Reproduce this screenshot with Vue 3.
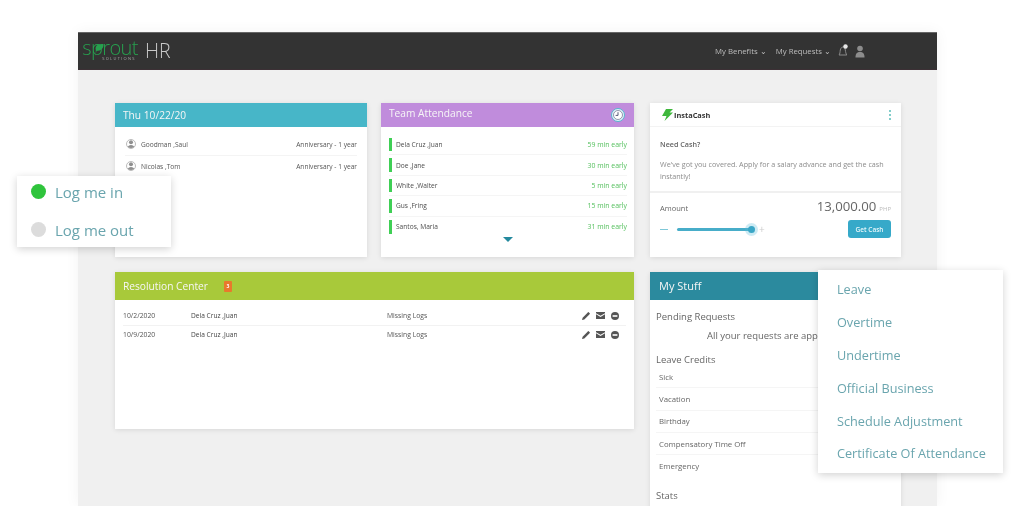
<script setup>
const birthdays = [
  { name: 'Goodman ,Saul', note: 'Anniversary - 1 year' },
  { name: 'Nicolas ,Tom', note: 'Anniversary - 1 year' },
]
const attendance = [
  { name: 'Dela Cruz ,Juan', note: '59 min early' },
  { name: 'Doe ,Jane', note: '30 min early' },
  { name: 'White ,Walter', note: '5 min early' },
  { name: 'Gus ,Fring', note: '15 min early' },
  { name: 'Santos, Maria', note: '31 min early' },
]
const resolutions = [
  { date: '10/2/2020', name: 'Dela Cruz ,Juan', issue: 'Missing Logs' },
  { date: '10/9/2020', name: 'Dela Cruz ,Juan', issue: 'Missing Logs' },
]
const credits = ['Sick', 'Vacation', 'Birthday', 'Compensatory Time Off', 'Emergency']
const requests = ['Leave', 'Overtime', 'Undertime', 'Official Business', 'Schedule Adjustment', 'Certificate Of Attendance']
</script>

<template>
  <div class="page">
    <div class="shell">
      <header class="nav">
        <div class="logo">
          <div class="logo-mark">
            <span class="logo-word">sprout</span>
            <svg class="leaf" width="12" height="16" viewBox="0 0 12 16">
              <path d="M2 15C3 11 3 9 2.500 6 3 3 6 1.500 10.500 2 11 6 8 9 3.500 9" fill="#27a04e" />
            </svg>
            <span class="logo-sub">SOLUTIONS</span>
          </div>
          <span class="logo-hr">HR</span>
        </div>
        <nav class="nav-links">
          <span>My Benefits ⌄</span>
          <span class="nav-link">My Requests ⌄</span>
          <svg width="12" height="14" viewBox="0 0 12 14">
            <path d="M2 11c1-1 1-3 1.300-5S5 3 6 3s2 1 2.300 3 .7 4 1.500 5z" fill="none" stroke="#8a8a8a" stroke-width="1" />
            <circle cx="8.500" cy="2.500" r="2.200" fill="#e8e8e8" />
          </svg>
          <svg width="10" height="13" viewBox="0 0 10 13">
            <circle cx="5" cy="3.500" r="2.800" fill="#8c8c8c" />
            <path d="M0.500 12.500c0-4 1.500-5.500 4.500-5.500s4.500 1.500 4.500 5.500z" fill="#8c8c8c" />
          </svg>
        </nav>
      </header>

      <main class="content">
        <section class="card">
          <h2 class="card-head head-teal">Thu 10/22/20</h2>
          <ul class="birthdays">
            <li v-for="item in birthdays" :key="item.name" class="birthday">
              <span class="avatar">
                <svg width="8" height="9" viewBox="0 0 8 9">
                  <circle cx="4" cy="2.300" r="2" fill="#8f8f8f" />
                  <path d="M.5 9c0-3 1.500-4 3.500-4s3.500 1 3.500 4z" fill="#8f8f8f" />
                </svg>
              </span>
              <span class="grow">{{ item.name }}</span>
              <span>{{ item.note }}</span>
            </li>
          </ul>
        </section>

        <section class="card">
          <h2 class="card-head head-purple">
            <span class="grow attend-title">Team Attendance</span>
            <svg width="14" height="14" viewBox="0 0 14 14">
              <circle cx="7" cy="7" r="6.500" fill="#dff2f7" stroke="#58b3cf" stroke-width="1" />
              <circle cx="7" cy="7" r="4.500" fill="#fff" stroke="#7a7f9a" stroke-width=".8" />
              <path d="M7 4.200V7.400H4.600" fill="none" stroke="#555a78" stroke-width="1" />
            </svg>
          </h2>
          <ul class="attendance">
            <li v-for="item in attendance" :key="item.name" class="attendee">
              <span class="grow">{{ item.name }}</span>
              <span class="early">{{ item.note }}</span>
            </li>
          </ul>
          <div class="more"></div>
        </section>

        <section class="card cash side">
          <div class="cash-head">
            <svg width="13" height="12" viewBox="0 0 13 12">
              <path d="M5 0h7L8.500 3.500H12L3.500 12l2-5H1z" fill="#3fb83c" />
            </svg>
            <strong class="grow">InstaCash</strong>
            <span class="dots"><i></i><i></i><i></i></span>
          </div>
          <div class="cash-body">
            <p class="need">Need Cash?</p>
            <p class="copy">We've got you covered. Apply for a salary advance and get the cash instantly!</p>
          </div>
          <div class="cash-foot">
            <div class="amount-row">
              <span class="grow">Amount</span>
              <span class="amount">13,000.00</span>
              <span class="php">PHP</span>
            </div>
            <div class="slider-row">
              <span class="minus"></span>
              <span class="track"><span class="knob"></span></span>
              <span class="plus">+</span>
              <button class="get-cash" type="button">Get Cash</button>
            </div>
          </div>
        </section>

        <section class="card wide">
          <h2 class="card-head head-green tall">
            Resolution Center
            <span class="badge">3</span>
          </h2>
          <ul class="resolutions">
            <li v-for="item in resolutions" :key="item.date" class="resolution">
              <span class="res-date">{{ item.date }}</span>
              <span class="res-name">{{ item.name }}</span>
              <span class="res-issue">{{ item.issue }}</span>
              <span class="res-actions">
                <svg width="8" height="8" viewBox="0 0 9 9"><path d="M0 9l.7-2.600L6 1l2 2-5.400 5.300zM6.700.3l.5-.3L9 1.800l-.3.500L8 3 6 1z" fill="#555" /></svg>
                <svg width="9" height="7" viewBox="0 0 9 7"><path d="M0 0h9v1.200L4.500 3.800 0 1.200zM0 2.300l4.500 2.600L9 2.300V7H0z" fill="#555" /></svg>
                <svg width="8" height="8" viewBox="0 0 8 8"><circle cx="4" cy="4" r="4" fill="#555" /><rect x="1.600" y="3.200" width="4.800" height="1.600" fill="#fff" /></svg>
              </span>
            </li>
          </ul>
        </section>

        <section class="card stuff side">
          <h2 class="card-head head-blue tall">My Stuff</h2>
          <div class="stuff-body">
            <h3>Pending Requests</h3>
            <p class="approved">All your requests are approved</p>
            <h3>Leave Credits</h3>
            <ul class="credits">
              <li v-for="item in credits" :key="item">{{ item }}</li>
            </ul>
            <h3 class="stats">Stats</h3>
          </div>
        </section>
      </main>
    </div>

    <div class="popup clock">
      <div class="clock-row"><span class="dot on"></span>Log me in</div>
      <div class="clock-row"><span class="dot"></span>Log me out</div>
    </div>

    <ul class="popup request-menu">
      <li v-for="item in requests" :key="item">{{ item }}</li>
    </ul>
  </div>
</template>

<style>
html, body { margin: 0; background: #fff; }
</style>

<style scoped>
* { box-sizing: border-box; }
ul { list-style: none; margin: 0; padding: 0; }
h2, h3, p { margin: 0; font-weight: 400; }
.grow { flex: 1; }

.page {
  position: relative;
  width: 1024px;
  height: 506px;
  overflow: hidden;
  background: #fff;
  font-family: "Open Sans", sans-serif;
  padding: 32px 0 0 78px;
  color: #555;
  filter: blur(.35px);
}
.shell {
  width: 859px;
  height: 474px;
  box-shadow: 0 0 14px rgba(0, 0, 0, .05);
  display: flex;
  flex-direction: column;
}
.nav {
  height: 38px;
  flex: none;
  background: #333;
  display: flex;
  align-items: center;
  justify-content: space-between;
  padding: 0 72px 0 4px;
  border-bottom: 1px solid #3c3035;
  border-top: 1px solid #666;
}
.logo { display: flex; align-items: center; gap: 7px; }
.logo-mark { position: relative; display: flex; flex-direction: column; align-items: center; width: 56px; margin-top: -3px; }
.logo-word { font-size: 20px; line-height: 17px; font-weight: 300; color: #27a04e; letter-spacing: -.6px; }
.leaf { position: absolute; left: 11px; top: 3px; }
.logo-sub { font-size: 4px; line-height: 5px; letter-spacing: 1.300px; color: #a8a8a8; padding-left: 18px; white-space: nowrap; }
.logo-hr { font-size: 19.500px; line-height: 20px; color: #c9c9c9; font-weight: 300; }
.nav-links { display: flex; align-items: center; gap: 6px; font-size: 7.800px; color: #bdbdbd; }
.nav-link { margin-left: 3px; }

.content {
  flex: 1;
  background: #f0f0f0;
  display: grid;
  grid-template-columns: 252px 253px 253px;
  grid-template-rows: 154px 157px;
  column-gap: 14px;
  row-gap: 15px;
  padding: 33px 0 0 37px;
}
.side { margin-left: 2px; }
.card { background: #fff; box-shadow: 0 1px 5px rgba(0, 0, 0, .1); min-width: 0; }
.card-head {
  height: 24px;
  display: flex;
  align-items: center;
  padding: 0 8px;
  font-size: 10.200px;
  color: #f6f6f6;
}
.tall { height: 28px; }
.head-teal { background: #47b6c8; }
.head-purple { background: #c08cdc; padding-right: 9px; }
.head-green { background: #a8c93a; }
.head-blue { background: #2b8a9e; font-size: 11px; padding: 0 9px 1px; }
.attend-title { position: relative; top: -2px; }

.birthdays { padding-top: 7px; }
.birthday {
  height: 21.500px;
  margin: 0 10px;
  display: flex;
  align-items: center;
  gap: 5px;
  font-size: 6.600px;
  color: #555;
  border-bottom: 1px solid #f4f4f4;
}
.birthday:last-child { border-bottom: 0; }
.avatar {
  width: 10px;
  height: 10px;
  border: 1px solid #bbb;
  border-radius: 50%;
  display: flex;
  align-items: center;
  justify-content: center;
  overflow: hidden;
  margin-left: 1px;
}

.attendance { padding: 8px 7px 0 8px; }
.attendee {
  height: 20.400px;
  display: flex;
  align-items: center;
  font-size: 6.600px;
  color: #4c4c4c;
  padding: 0 0 0 7px;
  position: relative;
  border-bottom: 1px solid #f5f5f5;
}
.attendee:last-child { border-bottom: 0; }
.attendee::before {
  content: "";
  position: absolute;
  left: 0;
  top: 3px;
  bottom: 3px;
  width: 3px;
  background: #3fcf55;
}
.early { color: #55c05e; font-size: 6.900px; }
.more {
  width: 0;
  height: 0;
  margin: 0 auto;
  border-left: 5px solid transparent;
  border-right: 5px solid transparent;
  border-top: 5px solid #24899e;
}

.cash-head {
  height: 24px;
  display: flex;
  align-items: center;
  gap: 0;
  padding: 0 10px 0 11px;
  font-size: 7.400px;
  color: #333;
  border-bottom: 1px solid #f3f3f3;
}
.dots { display: flex; flex-direction: column; gap: 2px; }
.dots i { width: 2px; height: 2px; border-radius: 50%; background: #58bdb8; display: block; }
.cash-body { padding: 11px 10px 0; height: 66px; border-bottom: 2px solid #f0f0f0; font-size: 7.200px; color: #8c8c8c; line-height: 12px; }
.need { font-weight: 600; color: #666; margin-bottom: 8px; }
.cash-foot { padding: 4px 10px 0; }
.amount-row { display: flex; align-items: baseline; font-size: 7.500px; color: #666; }
.amount { font-size: 13.200px; line-height: 18px; color: #666; }
.php { font-size: 6px; color: #bbb; margin-left: 3px; }
.slider-row { display: flex; align-items: center; margin-top: 5px; }
.minus { width: 8px; height: 1px; background: #7fc8d8; }
.track {
  margin-left: 9px;
  width: 75px;
  height: 3px;
  border-radius: 2px;
  background: #47adc9;
  position: relative;
}
.knob {
  position: absolute;
  right: -3px;
  top: -2px;
  width: 7px;
  height: 7px;
  border-radius: 50%;
  background: #3aa6c6;
  box-shadow: 0 0 0 3px rgba(90, 190, 220, .3);
}
.plus { margin-left: 7px; font-size: 10px; line-height: 10px; color: #ccc; flex: 1; }
.get-cash {
  width: 43px;
  height: 18px;
  border: 0;
  border-radius: 3px;
  padding: 0;
  background: #36a9c9;
  color: #e8f8fb;
  font: 600 6.500px "Open Sans", sans-serif;
}

.wide { grid-column: 1 / 3; }
.badge {
  margin-left: 16px;
  width: 8px;
  height: 11px;
  background: #e8792c;
  border-radius: 1px;
  color: #fff;
  font-size: 5px;
  font-weight: 700;
  display: flex;
  align-items: center;
  justify-content: center;
}
.resolutions { padding: 7px 8px 0; }
.resolution {
  height: 18.500px;
  display: flex;
  align-items: center;
  font-size: 6.800px;
  color: #555;
  border-bottom: 1px solid #f2f2f2;
}
.resolution:last-child { border-bottom: 0; }
.res-date { width: 68px; }
.res-name { width: 196px; color: #444; font-size: 6.600px; }
.res-issue { flex: 1; }
.res-actions { display: flex; align-items: center; gap: 6px; padding-right: 7px; }

.stuff { height: 240px; }
.stuff-body { padding: 10px 6px; font-size: 9.500px; color: #666; }
.stuff-body h3 { font-size: 9.500px; line-height: 14px; color: #666; }
.approved { line-height: 14px; padding: 5px 0 10px 51px; font-size: 9.500px; white-space: nowrap; }
.credits { margin-top: -1px; }
.credits li {
  height: 22.300px;
  display: flex;
  align-items: center;
  padding-left: 3px;
  font-size: 7.800px;
  color: #666;
  border-bottom: 1px solid #f5f5f5;
}
.credits li:last-child { border-bottom: 0; }
.stuff-body .stats { margin-top: 12px; }

.popup {
  position: absolute;
  background: #fff;
  box-shadow: 0 2px 8px rgba(0, 0, 0, .18);
  color: #6aa5ae;
}
.clock {
  left: 17px;
  top: 176px;
  width: 154px;
  height: 71px;
  padding: 0 14px 2px;
  display: flex;
  flex-direction: column;
  justify-content: center;
  gap: 20px;
  font-size: 15px;
}
.clock-row { display: flex; align-items: center; gap: 9px; line-height: 18px; }
.dot { width: 15px; height: 15px; border-radius: 50%; background: #dcdcdc; }
.dot.on { background: #2fc43c; }
.request-menu {
  left: 818px;
  top: 270px;
  width: 185px;
  height: 203px;
  padding: 3px 19px 0;
  font-size: 12.700px;
}
.request-menu li { height: 32.800px; display: flex; align-items: center; white-space: nowrap; }
</style>
